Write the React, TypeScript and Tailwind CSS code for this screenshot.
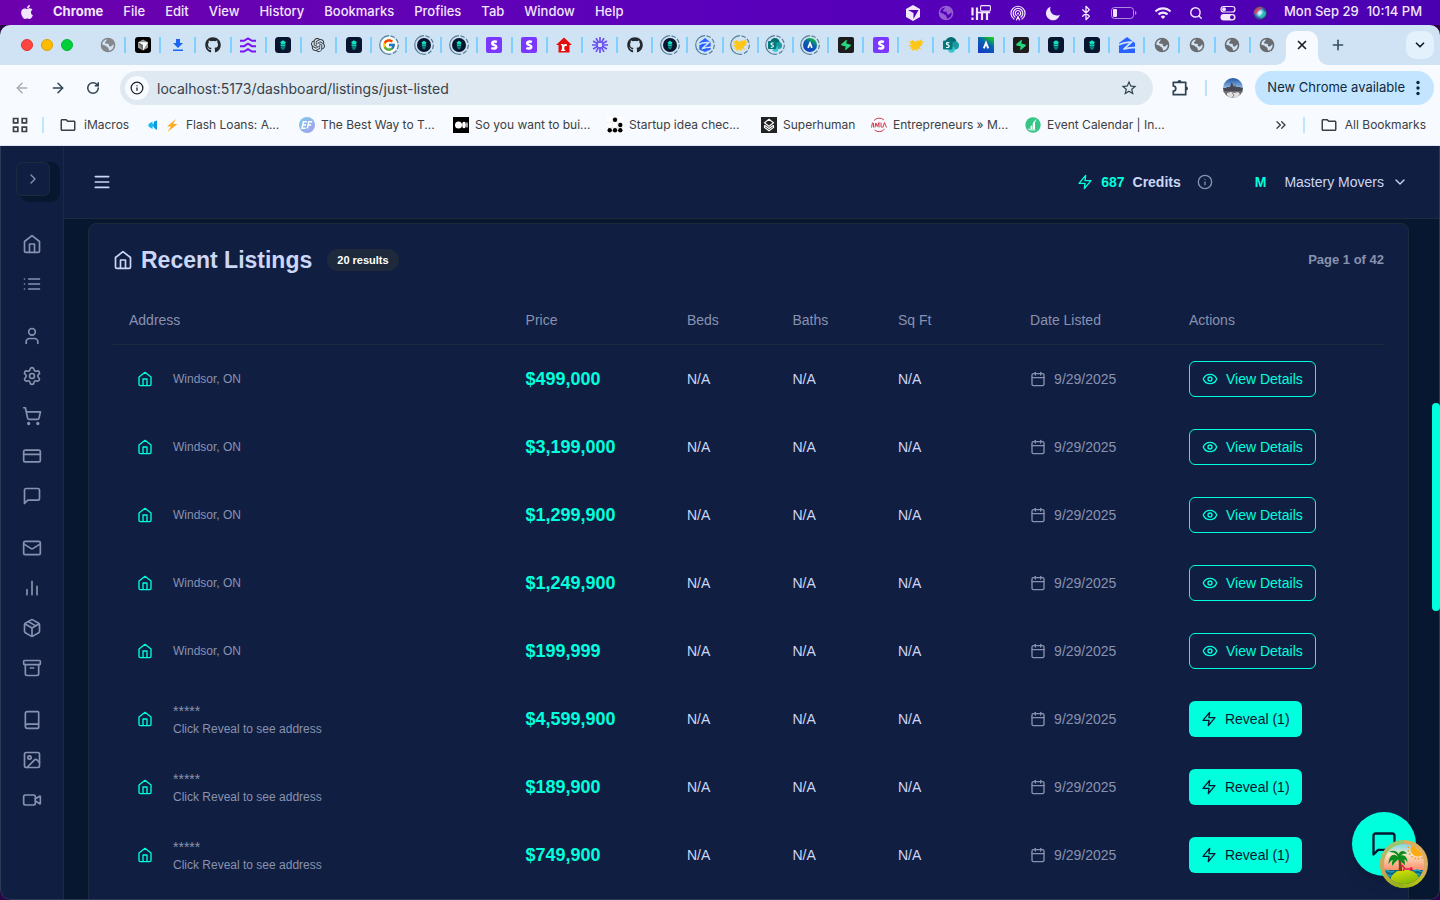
import type { ReactNode } from "react";
import {
  Archive,
  ArrowLeft,
  ArrowRight,
  Bluetooth,
  Book,
  Calendar,
  ChevronDown,
  ChevronRight,
  ChevronsRight,
  Eye,
  Info,
  Mail,
  Package,
  Plus,
  RotateCw,
  Search,
  Settings,
  ShoppingCart,
  CreditCard,
  User,
  Video,
  X,
  Image as ImageIcon,
} from "lucide-react";
import { FaApple, FaGithub } from "react-icons/fa";
import { FcGoogle } from "react-icons/fc";
import { SiOpenai, SiSupabase } from "react-icons/si";
import { MdWifi, MdStarBorder, MdOutlineFolder } from "react-icons/md";

/* ---------- drawings ---------- */

function Line({ className, d }: { className: string; d: string }) {
  return (
    <svg viewBox="0 0 24 24" className={className} fill="none" stroke="currentColor" strokeWidth="2" strokeLinecap="round" strokeLinejoin="round" aria-hidden="true">
      <path d={d} />
    </svg>
  );
}

function HomeIcon({ className }: { className: string }) {
  return <Line className={className} d="M3 9l9-7 9 7v11a2 2 0 0 1-2 2H5a2 2 0 0 1-2-2zM9 22V12h6v10" />;
}

function BarsIcon({ className }: { className: string }) {
  return <Line className={className} d="M6 20v-6M12 20V4M18 20v-10" />;
}

function ZapIcon({ className }: { className: string }) {
  return <Line className={className} d="M13 2 3 14h9l-1 8 10-12h-9z" />;
}

function ListIcon({ className }: { className: string }) {
  return <Line className={className} d="M8 6h13M8 12h13M8 18h13M3 6h.01M3 12h.01M3 18h.01" />;
}

function MenuIcon({ className }: { className: string }) {
  return <Line className={className} d="M4 12h16M4 5.500h16M4 18.500h16" />;
}

function ChatIcon({ className }: { className: string }) {
  return <Line className={className} d="M21 15a2 2 0 0 1-2 2H7l-4 4V5a2 2 0 0 1 2-2h14a2 2 0 0 1 2 2z" />;
}

function Globe({ className }: { className: string }) {
  return (
    <svg viewBox="0 0 24 24" className={className} fill="currentColor" aria-hidden="true">
      <path
        fillRule="evenodd"
        d="M12 1a11 11 0 1 0 0 22 11 11 0 0 0 0-22zM10.500 3.500C9.500 5 9.800 6.500 8 7.500c-.8.5-.6 2 .4 2.400 1.700.6 3.200-.3 4.400.6 1.200 1-.2 2.800 1.200 3.400 1.700.7 3.800-.3 5-2 .8-1.100 1.400-.6 1.600.6a8.700 8.700 0 0 1-7.100 8.200c.4-1.900-1-2.400-1-4.200-.1-1.600-2.500-1.200-3.500-2.700C8 12.500 5.500 12.300 3.300 11.400a8.800 8.800 0 0 1 7.200-7.900z"
      />
    </svg>
  );
}

function CursorIcon() {
  return (
    <svg viewBox="0 0 16 16" className="size-4" aria-hidden="true">
      <rect width="16" height="16" rx="3" fill="#000" />
      <path d="M8 2.500 13 5.300v5.500L8 13.500 3 10.800V5.300z" fill="#9a9a9a" />
      <path d="M3 5.300h10L8 13.500V8z" fill="#fff" />
      <path d="M8 8v5.500L3 5.300z" fill="#6b6b6b" />
    </svg>
  );
}

function DownloadIcon() {
  return (
    <svg viewBox="0 0 16 16" className="size-4" fill="#1a66f0" aria-hidden="true">
      <path d="M6 2h4v4h3l-5 5-5-5h3zM3 12.400h10V14H3z" />
    </svg>
  );
}

function WavesIcon() {
  return (
    <svg viewBox="0 0 16 16" className="size-4" fill="none" stroke="#7a14f5" strokeWidth="2" aria-hidden="true">
      <path d="M0 3.800h4L8 1.500l4 2.300h4M0 9.200h4l4-2.500 4 2.500h4M0 14.600h4l4-2.500 4 2.500h4" />
    </svg>
  );
}

function TealMark({ round = false }: { round?: boolean }) {
  return (
    <svg viewBox="0 0 16 16" className={round ? "size-3.5" : "size-4"} aria-hidden="true">
      <rect width="16" height="16" rx={round ? 8 : 3.500} fill="#07152e" />
      <path d="M8 3.200 10.800 5 9.800 7.200H6.200L5.200 5z" fill="#0fe3c4" />
      <path d="M5 7.500h6l-1.200 2H6.200z" fill="#0fcdb2" />
      <path d="M5.300 9.800h5.400L9 12.800H7z" fill="#0a7f78" />
    </svg>
  );
}

function StripeIcon() {
  return (
    <svg viewBox="0 0 16 16" className="size-4" aria-hidden="true">
      <rect width="16" height="16" rx="2" fill="#7a38ff" />
      <path d="M10.800 4.200C9.600 3.700 6.500 3.300 6.200 5.200c-.2 2.400 4.300 1.700 4.100 3.900-.2 2.200-3.400 1.900-5 1.100" fill="none" stroke="#fff" strokeWidth="2.500" transform="translate(0 .8)" />
    </svg>
  );
}

function RedHouse() {
  return (
    <svg viewBox="0 0 16 16" className="size-4" aria-hidden="true">
      <path d="M8 .5 16 8h-2.500v7.500h-11V8H0z" fill="#e60d0d" />
      <path d="M5 7h2.500v1.500C8 7 9.500 6.500 10.800 7.200v2c-1.500-.5-2.500 0-2.500 1.300v2.300h1V14H5v-1.200h1V8.200H5z" fill="#fff" />
    </svg>
  );
}

function Starburst() {
  return (
    <svg viewBox="0 0 16 16" className="size-4" stroke="#6a4ff0" strokeWidth="2" aria-hidden="true">
      <path d="M8 0v5.500M8 10.500V16M1.100 4l4.700 2.700M10.200 9.300l4.700 2.700M14.900 4l-4.700 2.700M5.800 9.300 1.100 12M4 1.100l2.700 4.700M9.300 10.200l2.700 4.700M12 1.100 9.300 5.800M6.700 10.200 4 14.900M0 8h5.500M10.500 8H16" strokeWidth="1.700" />
      <circle cx="8" cy="8" r="2.900" fill="none" strokeWidth="1" />
    </svg>
  );
}

function ZillowMark({ round = false }: { round?: boolean }) {
  return (
    <svg viewBox="0 0 16 16" className={round ? "size-3.5" : "size-4"} aria-hidden="true">
      <path d={round ? "M8 0 14.500 5v8L8 16l-6.500-3V5z" : "M8 0 16 6v10H0V6z"} fill="#2962ff" />
      <path d="M0 7.800C4 5.600 8 4.800 12.500 5.200L4.500 12.300c4-1.500 7.500-2 11.500-1.600" fill="none" stroke="#cfe3f4" strokeWidth="1.700" />
    </svg>
  );
}

function YellowMark() {
  return (
    <svg viewBox="0 0 16 16" className="size-4" fill="#ffc61a" aria-hidden="true">
      <path d="M0 3.500l3 .7L5 3l2 2 3-1.800 1.500.8L14 1.500l-.5 3L16 4.500 13.500 7l1.500 1-3.500 1.500 1.500 3-3-1-1 2.500-2-1.500L4 14l.5-2.500L2 12l1.500-2L0 9l3.500-1.200L1 6l2-.6z" />
    </svg>
  );
}

function SharePoint({ round = false }: { round?: boolean }) {
  return (
    <svg viewBox="0 0 16 16" className={round ? "size-3.5" : "size-4"} aria-hidden="true">
      <circle cx="8" cy="5.500" r="5.500" fill="#036c70" />
      <circle cx="12" cy="8.500" r="4" fill="#1a9ba1" />
      <circle cx="8.500" cy="12.500" r="3.300" fill="#37c6d0" />
      <rect y="3.500" width="9.500" height="9" rx="1" fill="#03787c" />
      <path d="M6.300 6C5.300 5.400 3.400 5.500 3.400 6.700c0 1.400 2.800 1 2.800 2.400S4.200 10.800 3.200 10.200" fill="none" stroke="#fff" strokeWidth="1.200" />
    </svg>
  );
}

function PeakMark({ round = false }: { round?: boolean }) {
  return (
    <svg viewBox="0 0 16 16" className={round ? "size-3.5" : "size-4"} aria-hidden="true">
      <defs>
        <linearGradient id="peak" x1="0.900" y1="0" x2="0.300" y2="1">
          <stop offset="0" stopColor="#19d80c" />
          <stop offset="0.450" stopColor="#0863ae" />
          <stop offset="1" stopColor="#153dc4" />
        </linearGradient>
      </defs>
      <rect width="16" height="16" rx={round ? 8 : 0} fill="url(#peak)" />
      <path d="M5.800 11.300 8 5.800l2.200 5.500" fill="none" stroke="#fff" strokeWidth="1.900" />
    </svg>
  );
}

function Supabase() {
  return (
    <span className="flex size-4 items-center justify-center rounded-xs bg-[#1c1c1c] text-[#24d97c]">
      <SiSupabase className="size-2.5 rotate-12" />
    </span>
  );
}

function Ringed({ children }: { children: ReactNode }) {
  return (
    <span className="relative flex size-5 shrink-0 items-center justify-center">
      <svg viewBox="0 0 20 20" className="absolute inset-0 size-5" fill="none" stroke="#567f96" strokeWidth="1.200" aria-hidden="true">
        <path d="M10 .7A9.300 9.300 0 0 0 10 19.300" />
        <path d="M10 .7A9.300 9.300 0 0 1 10 19.300" strokeDasharray="4.500 1.800" strokeDashoffset="-1.500" />
      </svg>
      {children}
    </span>
  );
}

function PalmBadge() {
  return (
    <svg viewBox="0 0 48 48" className="size-12" aria-hidden="true">
      <defs>
        <linearGradient id="rim" x1="0.900" y1="0.100" x2="0.300" y2="1">
          <stop offset="0" stopColor="#e0b060" />
          <stop offset="0.400" stopColor="#d9a766" />
          <stop offset="0.600" stopColor="#c0c020" />
          <stop offset="1" stopColor="#8db50c" />
        </linearGradient>
        <linearGradient id="rimLeft" x1="0" y1="0" x2="0" y2="1">
          <stop offset="0" stopColor="#8fce70" />
          <stop offset="0.600" stopColor="#d9a060" />
          <stop offset="1" stopColor="#8db50c" />
        </linearGradient>
        <linearGradient id="sky" x1="0" y1="0" x2="0" y2="1">
          <stop offset="0.050" stopColor="#69d5ee" />
          <stop offset="0.300" stopColor="#f5e4c4" />
          <stop offset="0.650" stopColor="#ff8a66" />
        </linearGradient>
        <linearGradient id="isle" x1="0" y1="0" x2="0.300" y2="1">
          <stop offset="0" stopColor="#dfe60a" />
          <stop offset="1" stopColor="#5da300" />
        </linearGradient>
        <clipPath id="disc">
          <circle cx="24" cy="24" r="20" />
        </clipPath>
      </defs>
      <circle cx="24" cy="24" r="24" fill="url(#rim)" />
      <path d="M24 0a24 24 0 0 0 0 48z" fill="url(#rimLeft)" />
      <g clipPath="url(#disc)">
        <rect width="48" height="48" fill="url(#sky)" />
        <circle cx="38" cy="9" r="7.500" fill="#ffab10" />
        <circle cx="38" cy="9" r="9.800" fill="none" stroke="#ff9418" strokeWidth="1.500" strokeDasharray="1.500 2" />
        <rect y="30" width="48" height="18" fill="#0b6885" />
        <path d="M2 31q3-2 6 0t6 0M34 31q3-2 6 0t6 0M2 35q3-2 6 0t6 0M34 35q3-2 6 0t6 0" stroke="#27a8c0" strokeWidth="1.300" fill="none" />
        <ellipse cx="25" cy="42" rx="15" ry="12.500" fill="url(#isle)" />
        <path d="M17.500 17c1.500 4 1.800 8 1 14h3.500c.4-6-1-10-2.500-14z" fill="#8a3a18" />
        <path d="M18 17C14 12.500 9 15 8.500 24c2-2.500 3-4 4.500-4-1 1.500-1.500 3-.5 6 1.500-3 3-4 5.500-6.500 2.500 2 5 3 6.500 6 .8-2.500.5-4-.5-6 1.500 0 2.500 1 3.500 3 0-5-2.500-8-7-7 2-1.500 4-2 6.500-1.500-2-3.500-6-4.500-8.500 0-2-3.500-6-4-9.500-2 4 0 7.500 1 9 5z" fill="#0b8e1e" />
        <path d="M22 25l3 4h8M24 29l-1 2M31 27v4" stroke="#e21c55" strokeWidth="1.500" fill="none" />
      </g>
    </svg>
  );
}

function ControlCenter() {
  return (
    <svg viewBox="0 0 16 16" className="size-4" aria-hidden="true">
      <rect x="1" y="1.500" width="14" height="5.500" rx="2.750" fill="none" stroke="currentColor" strokeWidth="1.200" />
      <circle cx="4" cy="4.250" r="1.900" fill="currentColor" />
      <rect x="0.500" y="9" width="15" height="6.500" rx="3.250" fill="currentColor" />
      <circle cx="12" cy="12.250" r="2" fill="#5200b4" />
    </svg>
  );
}

function Siri() {
  return (
    <svg viewBox="0 0 16 16" className="size-3.5" aria-hidden="true">
      <defs>
        <radialGradient id="siri">
          <stop offset="0" stopColor="#fff" />
          <stop offset="0.350" stopColor="#8fd6f5" />
          <stop offset="0.700" stopColor="#2c6fb5" />
          <stop offset="1" stopColor="#3a2370" />
        </radialGradient>
      </defs>
      <circle cx="8" cy="8" r="8" fill="url(#siri)" />
      <path d="M1 7C3 1 9 0 11 2 9 4 5 5 3 11z" fill="#e33a62" opacity="0.850" />
      <path d="M9 10c2-3 4-5 6-3 0 4-3 7-7 7z" fill="#20c5b0" opacity="0.800" />
    </svg>
  );
}

function Avatar() {
  return (
    <svg viewBox="0 0 20 20" className="size-5" aria-hidden="true">
      <defs>
        <clipPath id="avatar">
          <circle cx="10" cy="10" r="10" />
        </clipPath>
        <linearGradient id="avatarSky" x1="0" y1="0" x2="0" y2="1">
          <stop offset="0" stopColor="#1f57a5" />
          <stop offset="1" stopColor="#9dc4ea" />
        </linearGradient>
      </defs>
      <g clipPath="url(#avatar)">
        <rect width="20" height="11" fill="url(#avatarSky)" />
        <path d="M0 10h3l1-1h3l1-3 .8-2 .8 2 1.400 3 1-2 1 2h3l4 1v4H0z" fill="#474a52" />
        <path d="M0 13h20v7H0z" fill="#6f6a6c" />
        <path d="M4 15l4-1 3 1 4-1 2 2-3 4H7l-3-3z" fill="#e2dfe2" />
        <path d="M9 15l2 2-2 3" stroke="#8b8486" strokeWidth="1" fill="none" />
      </g>
    </svg>
  );
}

/* ---------- menu bar ---------- */

const menus = ["File", "Edit", "View", "History", "Bookmarks", "Profiles", "Tab", "Window", "Help"];

function MenuBar() {
  return (
    <div className="flex h-[25px] shrink-0 items-center justify-between bg-linear-to-r from-[#6c00ad] via-[#5a00bc] to-[#4a00b0] pl-[19px] pr-[18px] text-[13px] font-medium text-[#f1e6fb]">
      <nav aria-label="Application menu" className="-mt-0.5 flex items-center gap-5">
        <FaApple className="-mr-0.5 size-4" />
        <button className="font-bold">Chrome</button>
        {menus.map((m) => (
          <button key={m}>{m}</button>
        ))}
      </nav>
      <div className="flex items-center gap-[17px]">
        <svg viewBox="0 0 16 16" className="size-4" fill="currentColor" aria-hidden="true">
          <path d="M8 0 15 4v8l-7 4-7-4V4z" />
          <path d="M3 5h10.500L8.500 14V8z" fill="#5500b8" />
        </svg>
        <Globe className="size-4 opacity-40" />
        <svg viewBox="0 0 20 16" className="h-4 w-5" fill="none" stroke="currentColor" aria-hidden="true">
          <path d="M1.500 2.500v8M1.500 12.500v2.500M6 2.500v12.500M11 6.500V15M16 6.500V15" strokeWidth="2.200" />
          <path d="M5 7.500h14" strokeWidth="1.600" />
          <rect x="9.600" y="0.600" width="9.800" height="5.500" strokeWidth="1.100" rx="1" />
        </svg>
        <svg viewBox="0 0 16 16" className="h-4 w-5" fill="none" stroke="currentColor" strokeWidth="1.200" strokeLinecap="round" aria-hidden="true">
          <path d="M4 14A7 7 0 1 1 12 14M5 12A4.800 4.800 0 1 1 11 12M6.300 10.300a2.700 2.700 0 1 1 3.400 0" />
          <circle cx="8" cy="8.500" r="1" fill="currentColor" stroke="none" />
          <path d="M6.500 15 8 11.500 9.500 15" />
        </svg>
        <svg viewBox="0 0 16 16" className="size-4" fill="currentColor" aria-hidden="true">
          <path d="M5.600 1.700A7 7 0 1 0 14.800 9.800 5.400 5.400 0 0 1 12.500 10.500 6.500 6.500 0 0 1 5.600 1.700z" />
        </svg>
        <Bluetooth className="size-4" strokeWidth={2} />
        <svg viewBox="0 0 26 12" className="h-3 w-[26px]" aria-hidden="true">
          <rect x="0.500" y="0.500" width="22" height="11" rx="3" fill="none" stroke="currentColor" opacity="0.600" />
          <rect x="2" y="2" width="4" height="8" rx="1" fill="currentColor" />
          <path d="M24 4v4q1.500-.5 1.500-2T24 4z" fill="currentColor" opacity="0.600" />
        </svg>
        <MdWifi className="size-[18px]" />
        <Search className="size-3.5" strokeWidth={2.5} />
        <ControlCenter />
        <Siri />
        <span className="-mt-0.5 flex gap-2 whitespace-nowrap">
          <span>Mon Sep 29</span>
          <time>10:14 PM</time>
        </span>
      </div>
    </div>
  );
}

/* ---------- browser chrome ---------- */

const gray = <Globe className="size-4 text-[#6a6c70]" />;
const github = <FaGithub className="size-4 text-[#24292f]" />;

const tabs: [string, ReactNode][] = [
  ["New page", <Globe className="size-4 text-[#85878a]" />],
  ["Cursor", <CursorIcon />],
  ["Downloads", <DownloadIcon />],
  ["GitHub", github],
  ["Waves", <WavesIcon />],
  ["Leads", <TealMark />],
  ["ChatGPT", <SiOpenai className="size-3.5 text-[#333]" />],
  ["Leads", <TealMark />],
  ["Google", <Ringed><span className="flex size-4 items-center justify-center rounded-full bg-white"><FcGoogle className="size-3.5" /></span></Ringed>],
  ["Leads", <Ringed><TealMark round /></Ringed>],
  ["Leads", <Ringed><TealMark round /></Ringed>],
  ["Stripe", <StripeIcon />],
  ["Stripe", <StripeIcon />],
  ["Realtor", <RedHouse />],
  ["Loom", <Starburst />],
  ["GitHub", github],
  ["Leads", <Ringed><TealMark round /></Ringed>],
  ["Zillow", <Ringed><ZillowMark round /></Ringed>],
  ["Maps", <Ringed><YellowMark /></Ringed>],
  ["SharePoint", <Ringed><SharePoint round /></Ringed>],
  ["Peak", <Ringed><PeakMark round /></Ringed>],
  ["Supabase", <Supabase />],
  ["Stripe", <StripeIcon />],
  ["Maps", <YellowMark />],
  ["SharePoint", <SharePoint />],
  ["Peak", <PeakMark />],
  ["Supabase", <Supabase />],
  ["Leads", <TealMark />],
  ["Leads", <TealMark />],
  ["Zillow", <ZillowMark />],
  ["New page", gray],
  ["New page", gray],
  ["New page", gray],
  ["New page", gray],
];

function TabStrip() {
  return (
    <div className="flex h-10 shrink-0 items-center bg-[#cfe3f4] pl-[21px] pr-1.5">
      <div className="flex shrink-0 gap-2 pr-[18px]">
        <button aria-label="Close window" className="size-3 rounded-full border border-[#e0342f] bg-[#ff4540]" />
        <button aria-label="Minimize window" className="size-3 rounded-full border border-[#e0a000] bg-[#ffbb00]" />
        <button aria-label="Zoom window" className="size-3 rounded-full border border-[#00b52f] bg-[#00cf3c]" />
      </div>
      <div className="flex min-w-0 flex-1 items-center">
        {tabs.map(([name, icon], i) => (
          <button
            key={i}
            aria-label={name}
            className={
              i === tabs.length - 1
                ? "flex h-4 min-w-0 flex-1 items-center justify-center"
                : "flex h-4 min-w-0 flex-1 items-center justify-center border-r-2 border-[#7fcfff]"
            }
          >
            {icon}
          </button>
        ))}
      </div>
      <div className="ml-0.5 flex h-full shrink-0 items-end">
        <div className="relative flex h-[34px] w-8 items-center justify-center rounded-t-[10px] bg-[#f7faff]">
          <svg viewBox="0 0 10 10" className="absolute -left-2.5 bottom-0 size-2.5" fill="#f7faff" aria-hidden="true">
            <path d="M10 0v10H0A10 10 0 0 0 10 0z" />
          </svg>
          <svg viewBox="0 0 10 10" className="absolute -right-2.5 bottom-0 size-2.5" fill="#f7faff" aria-hidden="true">
            <path d="M0 0v10h10A10 10 0 0 1 0 0z" />
          </svg>
          <button aria-label="Close tab" className="-mt-1.5 text-[#1f2326]">
            <X className="size-3.5" strokeWidth={3} />
          </button>
        </div>
      </div>
      <button aria-label="New tab" className="ml-1.5 mr-[54px] flex size-7 shrink-0 items-center justify-center text-[#34505f]">
        <Plus className="size-4" strokeWidth={2.4} />
      </button>
      <button aria-label="Search tabs" className="flex size-7 shrink-0 items-center justify-center rounded-[10px] bg-[#e3f1fd] text-[#10202c]">
        <ChevronDown className="size-3.5" strokeWidth={3} />
      </button>
    </div>
  );
}

function Toolbar() {
  return (
    <div className="flex h-[46px] shrink-0 items-center bg-[#f7faff] pl-3.5 pr-1.5 text-[#2e434f]">
      <div className="flex items-center gap-5">
        <button aria-label="Back" className="text-[#a9adb2]">
          <ArrowLeft className="size-4" strokeWidth={2.2} />
        </button>
        <button aria-label="Forward">
          <ArrowRight className="size-4" strokeWidth={2.2} />
        </button>
        <button aria-label="Reload">
          <RotateCw className="size-3.5" strokeWidth={2.6} />
        </button>
      </div>
      <div className="ml-5 flex h-[34px] flex-1 items-center rounded-full bg-[#dfe9f2] pl-[5px] pr-[15px]">
        <button aria-label="Site information" className="flex size-6 items-center justify-center rounded-full bg-[#f7faff] text-[#202427]">
          <Info className="size-3.5" strokeWidth={2.2} />
        </button>
        <input
          aria-label="Address"
          defaultValue="localhost:5173/dashboard/listings/just-listed"
          className="ml-2 min-w-0 flex-1 bg-transparent text-[14px] text-[#37424a] outline-none"
        />
        <button aria-label="Bookmark this page">
          <MdStarBorder className="size-[18px]" />
        </button>
      </div>
      <button aria-label="Extensions" className="ml-[18px]">
        <svg viewBox="0 0 18 18" className="size-[18px]" aria-hidden="true">
          <path d="M2.300 3.300h12.400v12.400H2.300v-3.700a2.500 2.500 0 0 0 0-5z" fill="none" stroke="currentColor" strokeWidth="1.700" strokeLinejoin="round" />
          <path d="M6.500 3a2 2 0 0 1 4 0zM15 7.500a2 2 0 0 1 0 4z" fill="currentColor" />
        </svg>
      </button>
      <span className="ml-4 h-4 w-0.5 bg-[#bfe2fb]" />
      <button aria-label="Profile" className="ml-4">
        <Avatar />
      </button>
      <button className="ml-3 flex h-[34px] items-center gap-[11px] rounded-full bg-[#c3e5ff] pl-3 pr-3.5 text-[13px] text-[#0f2a3c]">
        New Chrome available
        <svg viewBox="0 0 4 16" className="h-4 w-1" fill="currentColor" aria-hidden="true">
          <circle cx="2" cy="2.500" r="1.700" />
          <circle cx="2" cy="8" r="1.700" />
          <circle cx="2" cy="13.500" r="1.700" />
        </svg>
      </button>
    </div>
  );
}

const bookmarks: { label: string; wide: boolean; icon: ReactNode }[] = [
  {
    label: "Flash Loans: A...",
    wide: true,
    icon: (
      <svg viewBox="0 0 35 16" className="h-4 w-[35px]" aria-hidden="true">
        <path d="M3.500 7l4-2.500V7l3-1.500v5l-3-1v2.500l-4-2.500z" fill="#12b9f2" />
        <path d="M9 4.500l3-1v9.500L9 11z" fill="#0a9ae6" />
        <path d="M31 2 22 9.500h4L22.500 15 32.500 7h-4.500z" fill="#ffab1a" />
      </svg>
    ),
  },
  {
    label: "The Best Way to T...",
    wide: true,
    icon: (
      <svg viewBox="0 0 16 16" className="size-4" aria-hidden="true">
        <defs>
          <linearGradient id="ef" x1="0" y1="0" x2="1" y2="1">
            <stop offset="0" stopColor="#76cfe4" />
            <stop offset="1" stopColor="#a99bf0" />
          </linearGradient>
        </defs>
        <circle cx="8" cy="8" r="8" fill="url(#ef)" />
        <path d="M7.800 4.800H4.500L3 11.200h3.600M4 8h3M13.200 4.800H9.800L8.300 11.500M9.200 8h3" fill="none" stroke="#fff" strokeWidth="1.500" />
      </svg>
    ),
  },
  {
    label: "So you want to bui...",
    wide: true,
    icon: (
      <svg viewBox="0 0 16 16" className="size-4" aria-hidden="true">
        <rect width="16" height="16" />
        <circle cx="5.500" cy="8" r="3.500" fill="#fff" />
        <ellipse cx="11" cy="8" rx="1.800" ry="3.300" fill="#fff" />
        <ellipse cx="14" cy="8" rx="0.700" ry="3" fill="#fff" />
      </svg>
    ),
  },
  {
    label: "Startup idea chec...",
    wide: true,
    icon: (
      <svg viewBox="0 0 16 16" className="size-4" aria-hidden="true">
        <rect width="16" height="16" fill="#fff" />
        <path d="M0 5.300h16M0 10.600h16M5.300 0v16M10.600 0v16" stroke="#ddd" strokeWidth="0.500" />
        <circle cx="8" cy="2.700" r="2.200" />
        <circle cx="13.300" cy="8" r="2.200" />
        <circle cx="2.700" cy="13.300" r="2.200" />
        <circle cx="8" cy="13.300" r="2.200" />
        <circle cx="13.300" cy="13.300" r="2.200" />
      </svg>
    ),
  },
  {
    label: "Superhuman",
    wide: false,
    icon: (
      <svg viewBox="0 0 16 16" className="size-4" aria-hidden="true">
        <rect width="16" height="16" fill="#222" />
        <path d="M8 2.300 12.500 5.800 8 9.200 3.500 5.800zM3.500 8.200 8 11.500l4.500-3.300M3.500 8.200v2.300L8 13.800l4.500-3.300V8.200" fill="none" stroke="#fff" strokeWidth="1.100" />
      </svg>
    ),
  },
  {
    label: "Entrepreneurs » M...",
    wide: true,
    icon: (
      <svg viewBox="0 0 16 16" className="size-4" fill="none" stroke="#d3263a" aria-hidden="true">
        <path d="M3 3.500A7 7 0 0 1 13 3M13.500 12A7 7 0 0 1 3.500 13" strokeWidth="0.900" />
        <path d="M.5 10.500 1.500 5.500M4 10.500l.8-4.500 1.500 3.500L8 5.500v5M10 5.500v4.500h1.500M11.800 10.500l1.700-5 2 5M2.500 6v4.500" strokeWidth="0.900" />
      </svg>
    ),
  },
  {
    label: "Event Calendar | In...",
    wide: true,
    icon: (
      <svg viewBox="0 0 16 16" className="size-4" aria-hidden="true">
        <circle cx="8" cy="8" r="7.700" fill="#35c585" />
        <path d="M5.500 12.500V9l1.800-.5v4zM7.800 12.500V6L10 3.500v9zM4 11l-1 1.500 2 .5z" fill="#fff" />
        <path d="M10 5 11 2.500M4.500 13h6" stroke="#fff" strokeWidth="0.800" fill="none" />
      </svg>
    ),
  },
];

function BookmarkBar() {
  return (
    <div className="flex h-[35px] shrink-0 items-center border-b border-[#dde6ee] bg-[#f7faff] pb-1.5 pl-3 pr-3.5 text-[12px] text-[#3c4043]">
      <button aria-label="Tab groups">
        <svg viewBox="0 0 16 16" className="size-4" fill="none" stroke="#3c4043" strokeWidth="1.700" aria-hidden="true">
          <path d="M1.500 1.500h4.300v4.300H1.500zM10.200 1.500h4.300v4.300h-4.300zM1.500 10.200h4.300v4.300H1.500zM10.200 10.200h4.300v4.300h-4.300z" />
        </svg>
      </button>
      <span className="ml-3.5 h-4 w-0.5 bg-[#bfe6ff]" />
      <nav aria-label="Bookmarks" className="ml-[15px] flex min-w-0 flex-1 items-center overflow-hidden whitespace-nowrap">
        <a href="#imacros" className="flex w-[86px] shrink-0 items-center gap-[7px]">
          <MdOutlineFolder className="size-[18px]" />
          iMacros
        </a>
        {bookmarks.map((b) => (
          <a
            key={b.label}
            href="#bookmark"
            className={b.wide ? "flex w-[154px] shrink-0 items-center gap-1.5" : "flex w-[110px] shrink-0 items-center gap-1.5"}
          >
            <span className="shrink-0">{b.icon}</span>
            {b.label}
          </a>
        ))}
      </nav>
      <button aria-label="More bookmarks" className="shrink-0">
        <ChevronsRight className="size-4" strokeWidth={2} />
      </button>
      <span className="ml-3.5 h-4 w-0.5 shrink-0 bg-[#bfe6ff]" />
      <a href="#all" className="ml-[15px] flex shrink-0 items-center gap-[7px] whitespace-nowrap">
        <MdOutlineFolder className="size-[18px]" />
        All Bookmarks
      </a>
    </div>
  );
}

/* ---------- application ---------- */

const navGroups: [string, ReactNode][][] = [
  [
    ["Home", <HomeIcon className="size-5" />],
    ["Listings", <ListIcon className="size-5" />],
  ],
  [
    ["Profile", <User className="size-5" />],
    ["Settings", <Settings className="size-5" />],
    ["Shop", <ShoppingCart className="size-5" />],
    ["Billing", <CreditCard className="size-5" />],
    ["Messages", <ChatIcon className="size-5" />],
  ],
  [
    ["Mail", <Mail className="size-5" />],
    ["Analytics", <BarsIcon className="size-5" />],
    ["Products", <Package className="size-5" />],
    ["Archive", <Archive className="size-5" />],
  ],
  [
    ["Guides", <Book className="size-5" />],
    ["Gallery", <ImageIcon className="size-5" />],
    ["Videos", <Video className="size-5" />],
  ],
];

function Sidebar() {
  return (
    <aside className="flex w-[63px] shrink-0 flex-col items-center border-r border-[#1e2a3b] pt-4 text-[#8892b0]">
      <button
        aria-label="Expand sidebar"
        className="mr-[-2px] flex size-[34px] shrink-0 items-center justify-center rounded-md border border-[#1e2a3b] bg-[#101e41] shadow-[7px_3px_0_3px_#081730]"
      >
        <ChevronRight className="size-4" />
      </button>
      <nav aria-label="Main" className="mt-[38px] flex flex-col gap-8">
        {navGroups.map((group, g) => (
          <div key={g} className="flex flex-col gap-5">
            {group.map(([name, icon]) => (
              <a key={name} href={"#" + name.toLowerCase()} aria-label={name}>
                {icon}
              </a>
            ))}
          </div>
        ))}
      </nav>
    </aside>
  );
}

function Header() {
  return (
    <header className="flex h-[73px] shrink-0 items-center justify-between border-b border-[#1e2a3b] bg-[#101e41] pl-7 pr-[31px] text-[14px] text-[#ccd6f6]">
      <button aria-label="Open menu">
        <MenuIcon className="size-5" />
      </button>
      <div className="flex items-center">
        <ZapIcon className="size-4 text-[#00ffdd]" />
        <span className="ml-2 font-bold text-[#00ffdd]">687</span>
        <span className="ml-2 font-bold">Credits</span>
        <button aria-label="About credits" className="ml-4 text-[#8892b0]">
          <Info className="size-4" />
        </button>
        <button className="ml-[42px] flex items-center">
          <span className="font-bold text-[#00ffdd]">M</span>
          <span className="ml-[18px]">Mastery Movers</span>
          <ChevronDown className="ml-2 size-4" />
        </button>
      </div>
    </header>
  );
}

const listings: { price: string; revealed: boolean }[] = [
  { price: "$499,000", revealed: true },
  { price: "$3,199,000", revealed: true },
  { price: "$1,299,900", revealed: true },
  { price: "$1,249,900", revealed: true },
  { price: "$199,999", revealed: true },
  { price: "$4,599,900", revealed: false },
  { price: "$189,900", revealed: false },
  { price: "$749,900", revealed: false },
];

function ListingsTable() {
  return (
    <table className="w-full table-fixed border-separate border-spacing-0 text-left text-[14px] text-[#ccd6f6]">
      <colgroup>
        <col className="w-[31.200%]" />
        <col className="w-[12.700%]" />
        <col className="w-[8.300%]" />
        <col className="w-[8.300%]" />
        <col className="w-[10.400%]" />
        <col className="w-[12.500%]" />
        <col />
      </colgroup>
      <thead>
        <tr className="h-[49px] text-[#8892b0]">
          {["Address", "Price", "Beds", "Baths", "Sq Ft", "Date Listed", "Actions"].map((h) => (
            <th key={h} scope="col" className="border-b border-[#1e2a3b] px-4 font-normal">
              {h}
            </th>
          ))}
        </tr>
      </thead>
      <tbody>
        {listings.map((l) => (
          <tr key={l.price} className="h-[68px]">
            <td className="px-4">
              <div className="flex items-center gap-3">
                <span className="flex size-8 items-center justify-center text-[#00ffdd]">
                  <HomeIcon className="size-4" />
                </span>
                <div className="text-[#8892b0]">
                  {!l.revealed && <div className="text-[14px] leading-5">*****</div>}
                  <div className="text-[12px] leading-4">{l.revealed ? "Windsor, ON" : "Click Reveal to see address"}</div>
                </div>
              </div>
            </td>
            <td className="px-4 text-[18px] font-bold text-[#00ffdd]">{l.price}</td>
            <td className="px-4">N/A</td>
            <td className="px-4">N/A</td>
            <td className="px-4">N/A</td>
            <td className="px-4">
              <div className="flex items-center gap-2 text-[#8892b0]">
                <Calendar className="size-4" />
                9/29/2025
              </div>
            </td>
            <td className="px-4">
              {l.revealed ? (
                <button className="flex h-9 items-center gap-2 rounded-md border border-[#00ffdd] px-3 whitespace-nowrap text-[#00ffdd]">
                  <Eye className="size-4" />
                  View Details
                </button>
              ) : (
                <button className="flex h-9 items-center gap-2 rounded-md bg-[#00ffdd] px-3 whitespace-nowrap text-[#081730]">
                  <ZapIcon className="size-4" />
                  Reveal (1)
                </button>
              )}
            </td>
          </tr>
        ))}
      </tbody>
    </table>
  );
}

export default function App() {
  return (
    <div className="flex h-screen flex-col overflow-hidden bg-[#2a0648] font-['Inter','Liberation_Sans',sans-serif]">
      <MenuBar />
      <div className="relative flex min-h-0 flex-1 flex-col overflow-hidden rounded-[10px]">
        <TabStrip />
        <Toolbar />
        <BookmarkBar />
        <div className="flex min-h-0 flex-1 overflow-hidden rounded-b-[10px] border-x border-b border-[#2b3a55] bg-[#101e41] font-['Liberation_Sans',Arial,sans-serif]">
          <Sidebar />
          <div className="flex min-w-0 flex-1 flex-col bg-[#081730]">
            <Header />
            <main className="flex min-h-0 flex-1 flex-col overflow-hidden pt-1 pl-6 pr-[30px]">
              <section className="min-h-full shrink-0 rounded-lg border border-[#1e2a3b] bg-[#101e41] px-6 pb-6">
                <div className="flex h-[72px] items-center justify-between">
                  <div className="flex items-center">
                    <h1 className="flex items-center gap-2 text-[23px] font-bold text-[#ccd6f6]">
                      <HomeIcon className="size-5" />
                      Recent Listings
                    </h1>
                    <span className="ml-[15px] flex h-[22px] items-center rounded-full bg-[#1e2a3b] px-2.5 text-[11px] font-bold text-white">20 results</span>
                  </div>
                  <span className="text-[13px] font-bold text-[#8892b0]">Page 1 of 42</span>
                </div>
                <ListingsTable />
              </section>
            </main>
          </div>
        </div>
        <div className="absolute right-0 top-[378px] h-52 w-2 rounded-full bg-[#00ffdd]" />
        <button aria-label="Open chat" className="absolute bottom-6 right-6 flex size-16 items-center justify-center rounded-full bg-[#00ffdd] text-[#081730] shadow-lg">
          <ChatIcon className="size-7" />
        </button>
        <button aria-label="Open developer tools" className="absolute bottom-3 right-3 size-12 rounded-full">
          <PalmBadge />
        </button>
      </div>
    </div>
  );
}
